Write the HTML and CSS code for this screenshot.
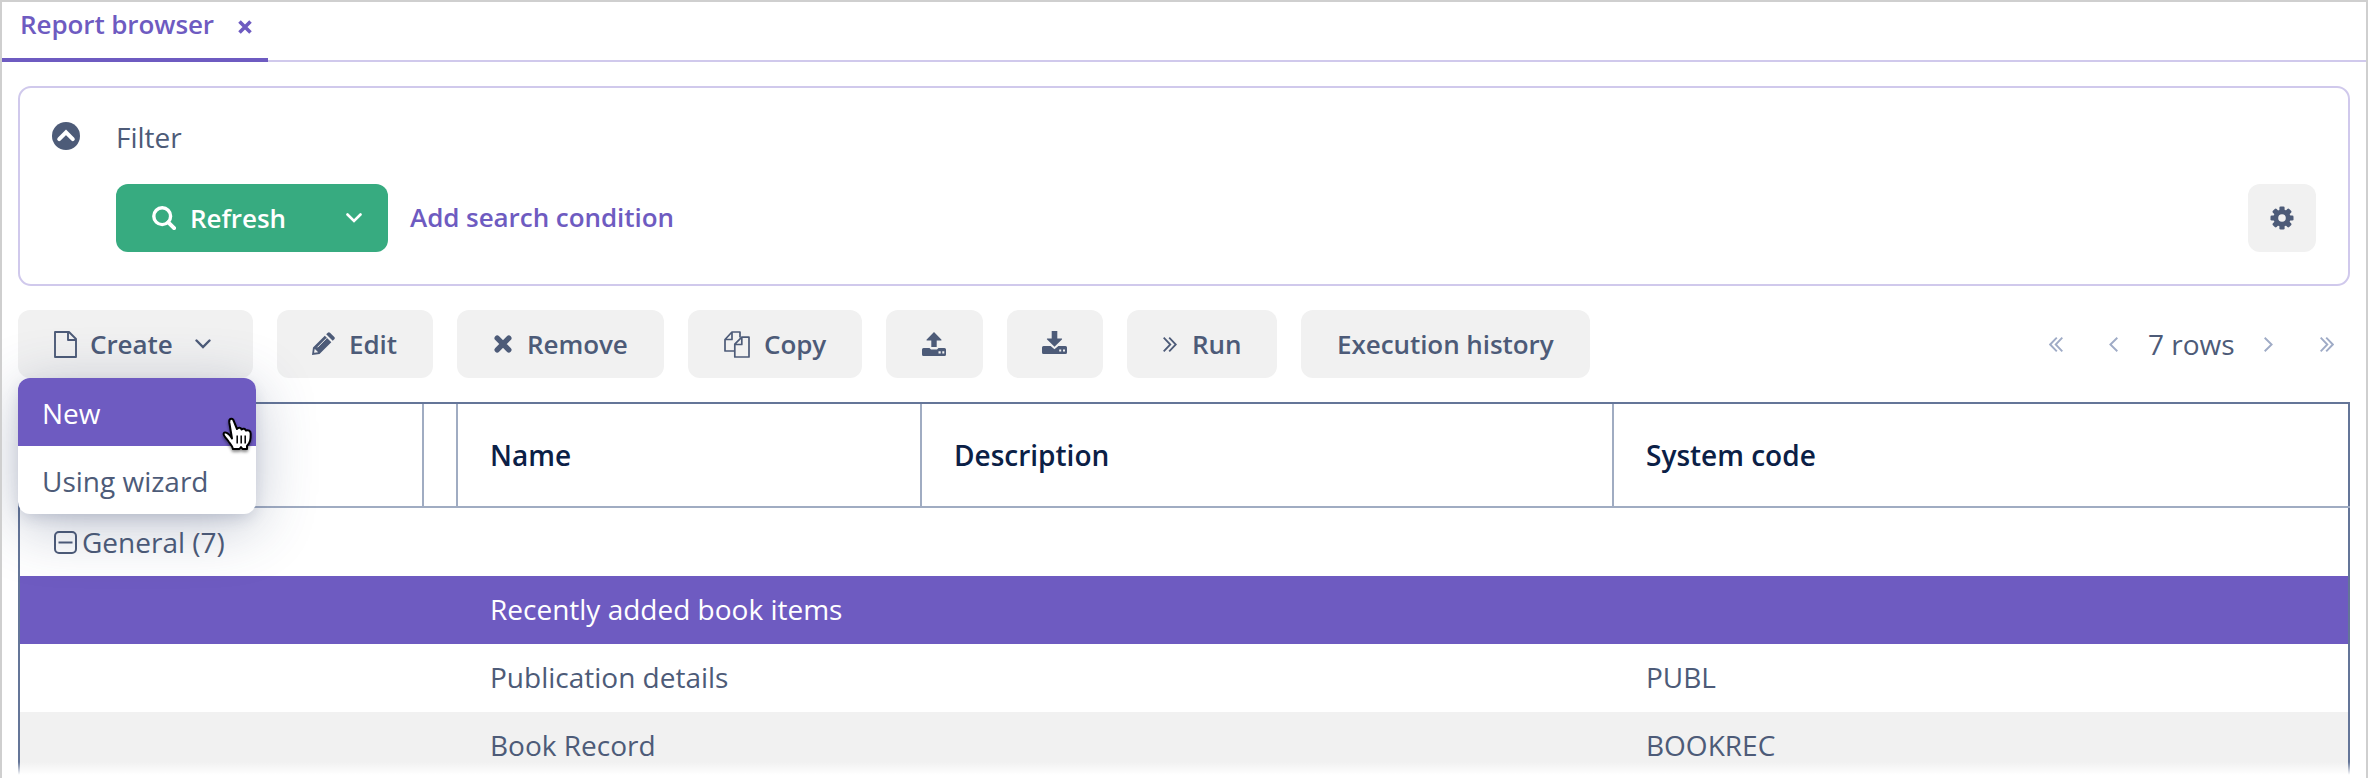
FILE: index.html
```html
<!DOCTYPE html>
<html lang="en">
<head>
<meta charset="utf-8">
<title>Report browser</title>
<link rel="stylesheet" href="styles.css">
</head>
<body>
<div class="window">
  <nav class="tabs">
    <div class="tab"><span class="tab-label">Report browser</span>
      <svg class="tab-close" width="14" height="14" viewBox="0 0 14 14"><path d="M1.500 1.500l11 11M12.500 1.500l-11 11" fill="none" stroke="currentColor" stroke-width="3.600"/></svg>
    </div>
  </nav>
  <main class="content">
    <section class="filter">
      <div class="filter-head">
        <svg width="28" height="28" viewBox="0 0 28 28"><circle cx="14" cy="14" r="14" fill="currentColor"/><path d="M7.200 17.200L14 10.400l6.800 6.800" fill="none" stroke="#fff" stroke-width="4" stroke-linecap="round"/></svg>
        <span class="filter-title">Filter</span>
      </div>
      <div class="filter-body">
        <button class="refresh">
          <svg class="search-icon" width="24" height="24" viewBox="0 0 24 24"><circle cx="10.200" cy="10.200" r="8.400" fill="none" stroke="currentColor" stroke-width="3.400"/><path d="M16.300 16.300l5.800 5.800" stroke="currentColor" stroke-width="4" stroke-linecap="round"/></svg>
          <span class="refresh-label">Refresh</span>
          <svg class="refresh-arrow" width="16" height="10" viewBox="0 0 16 10"><path d="M1.500 1.500L8 8l6.500-6.500" fill="none" stroke="currentColor" stroke-width="2.600" stroke-linecap="round"/></svg>
        </button>
        <a class="add-condition">Add search condition</a>
        <button class="settings">
          <svg width="24" height="24" viewBox="-12 -12 24 24"><g fill="currentColor"><rect x="-2.600" y="-11.500" width="5.200" height="23" rx="1.300"/><rect x="-2.600" y="-11.500" width="5.200" height="23" rx="1.300" transform="rotate(45)"/><rect x="-2.600" y="-11.500" width="5.200" height="23" rx="1.300" transform="rotate(90)"/><rect x="-2.600" y="-11.500" width="5.200" height="23" rx="1.300" transform="rotate(135)"/><circle r="8.600"/></g><circle r="3.800" fill="#f1f1f1"/></svg>
        </button>
      </div>
    </section>

    <div class="toolbar">
      <div class="create-wrap">
        <button class="btn create">
          <svg width="23" height="27" viewBox="0 0 23 27"><path d="M1 1h14l7 7v18H1zM14 1v8h8" fill="none" stroke="currentColor" stroke-width="1.900" stroke-linejoin="round"/></svg>
          <span class="create-label">Create</span>
          <svg class="create-arrow" width="16" height="10" viewBox="0 0 16 10"><path d="M1.500 1.500L8 8l6.500-6.500" fill="none" stroke="currentColor" stroke-width="2.400" stroke-linecap="round"/></svg>
        </button>
        <div class="menu">
          <div class="menu-item active">New</div>
          <div class="menu-item">Using wizard</div>
          <svg class="cursor" width="36" height="40" viewBox="0 0 36 40"><path d="M11 22.500L8.300 6.500c-.6-4.500 3.700-5 4.700-.8l3 7.300c1.500-2 4-1.500 4.500.5 1.600-1.500 3.800-.8 4.300 1 2.400-1 4.900.4 4.900 3.200 0 6-.4 8.800-3.700 12.300v3h-4.500l-1.500-2-1.500 2h-6.500c-.5-3-2.200-4.600-4.400-7.500-1.800-2.500-5-5.500-5-7.500 0-2.400 4-2.700 8.400 4.500z" class="cursor-hand"/><path d="M16.200 19.500v8M20.200 19.500v8M24.200 19.500v8" stroke="#000" stroke-width="1.500"/></svg>
        </div>
      </div>
      <button class="btn edit">
        <svg width="24" height="24" viewBox="0 0 24 24"><path d="M1 23l1-7.500L13.800 3.700l6.500 6.500L8.500 22zM15.200 2.300l1.600-1.600c.7-.7 1.500-.7 2.200 0L23.300 5c.7.700.7 1.500 0 2.200l-1.600 1.600z" fill="currentColor"/><path d="M3.700 16.800l3.500 3.500-3.800.5-.3-.3z" fill="#f1f1f1"/><path d="M6.500 15.300l9-9" stroke="#f1f1f1" stroke-width="1"/></svg>
        <span>Edit</span>
      </button>
      <button class="btn remove">
        <svg width="18" height="18" viewBox="0 0 18 18"><path d="M3.200 3.200l11.600 11.600M14.800 3.200L3.200 14.800" stroke="currentColor" stroke-width="5.400" stroke-linecap="round"/></svg>
        <span>Remove</span>
      </button>
      <button class="btn copy">
        <svg width="26" height="27" viewBox="0 0 26 27"><g fill="none" stroke="currentColor" stroke-width="1.700" stroke-linejoin="round"><path d="M10.500 20H1V8.500L8 1h8v5.500M8 1v7.500H1"/><path d="M10.800 13.200l7-7H25V26H10.800zM17.800 6.500v7h-7"/></g></svg>
        <span>Copy</span>
      </button>
      <button class="btn upload">
        <svg width="24" height="24" viewBox="0 0 24 24"><g fill="currentColor"><path d="M12 0l7.300 7.500c.4.500.2 1-.4 1H14.700V15H9.300V8.500H5.100c-.6 0-.8-.5-.4-1z"/><path d="M1.500 16H7.500l1.500 1.500h6L16.500 16H22.500Q24 16 24 17.500V22.500Q24 24 22.500 24H1.500Q0 24 0 22.500V17.500Q0 16 1.500 16z"/></g><path d="M16.500 19.200H18.700v2.200H16.500zM20.300 19.200H22.300v2.200H20.300z" fill="#f1f1f1"/></svg>
      </button>
      <button class="btn download">
        <svg width="25" height="23" viewBox="0 0 25 23"><g fill="currentColor"><path d="M9.700 0H15.300V7.500H19.500c.6 0 .8.500.4 1L12.500 15.800 5.100 8.500c-.4-.5-.2-1 .4-1H9.700z"/><path d="M1.500 15H8.600l3.900 3.300 3.900-3.300H23.500Q25 15 25 16.500V21.500Q25 23 23.500 23H1.500Q0 23 0 21.500V16.500Q0 15 1.500 15z"/></g><path d="M17.200 18.500H19.200v2H17.200zM21 18.500H23v2H21z" fill="#f1f1f1"/></svg>
      </button>
      <button class="btn run">
        <svg width="14" height="15" viewBox="0 0 14 15"><path d="M.7.700l6.600 6.800L.7 14.300M6.200.700l6.600 6.800-6.600 6.800" fill="none" stroke="currentColor" stroke-width="1.800"/></svg>
        <span>Run</span>
      </button>
      <button class="btn history"><span>Execution history</span></button>
      <div class="pager">
        <svg width="14" height="15" viewBox="0 0 14 15"><path d="M13.300.700L6.700 7.500l6.600 6.800M7.800.700L1.200 7.500l6.600 6.800"/></svg>
        <svg class="prev" width="9" height="15" viewBox="0 0 9 15"><path d="M8.300.700L1.400 7.500l6.900 6.800"/></svg>
        <span class="rows">7 rows</span>
        <svg class="next" width="9" height="15" viewBox="0 0 9 15"><path d="M.7.700l6.900 6.800-6.900 6.800"/></svg>
        <svg width="14" height="15" viewBox="0 0 14 15"><path d="M.7.700l6.600 6.800L.7 14.300M6.200.700l6.600 6.800-6.600 6.800"/></svg>
      </div>
    </div>

    <div class="table">
      <div class="row head">
        <div class="cell"></div><div class="cell"></div>
        <div class="cell">Name</div><div class="cell">Description</div><div class="cell">System code</div>
      </div>
      <div class="group">
        <svg width="23" height="23" viewBox="0 0 23 23"><rect x="1" y="1" width="21" height="21" rx="4" fill="none" stroke="currentColor" stroke-width="2"/><path d="M4.500 11.500h14" stroke="currentColor" stroke-width="2"/></svg>
        <span>General (7)</span>
      </div>
      <div class="row selected"><div></div><div></div><div class="cell">Recently added book items</div><div></div><div></div></div>
      <div class="row"><div></div><div></div><div class="cell">Publication details</div><div></div><div class="cell">PUBL</div></div>
      <div class="row odd"><div></div><div></div><div class="cell">Book Record</div><div></div><div class="cell">BOOKREC</div></div>
    </div>
  </main>
  <div class="fade"></div>
</div>
</body>
</html>
```
FILE: styles.css
```css
* { box-sizing: border-box; }
body {
  margin: 0;
  background: #fff;
  color: #4d5b78;
  font: 28px/1.362 "Open Sans", "Noto Sans", sans-serif;
}
svg { display: block; flex: none; }
button {
  border: 0;
  padding: 0;
  margin: 0;
  color: inherit;
  font: 600 26px/1.362 "Open Sans", "Noto Sans", sans-serif;
  letter-spacing: -.06px;
}
span, a, .cell, .menu-item { white-space: nowrap; }

.window {
  position: relative;
  height: 778px;
  overflow: hidden;
  border: 2px solid #cfcfcf;
  border-bottom: 0;
}
.tabs {
  display: flex;
  height: 60px;
  box-shadow: inset 0 -2px #d0c9ec;
}
.tab {
  display: flex;
  width: 266px;
  padding-left: 18px;
  border-bottom: 4px solid #6e5bc1;
  color: #6e5bc1;
  font-size: 26px;
  font-weight: 600;
  letter-spacing: -.09px;
}
.tab-label { width: 218px; margin-top: 5px; }
.tab-close { margin-top: 18px; }

.content { padding: 24px 16px 0; }
.filter {
  height: 200px;
  padding: 28px 32px 0;
  border: 2px solid #d0c9ec;
  border-radius: 13px;
}
.filter-head { display: flex; align-items: center; height: 40px; }
.filter-title { margin-left: 36px; padding-top: 2px; }
.filter-body { display: flex; align-items: center; margin-top: 28px; padding-left: 64px; }
.refresh {
  display: flex;
  align-items: center;
  width: 272px;
  height: 68px;
  padding-left: 36px;
  border-radius: 12px;
  background: #37ab80;
  color: #fff;
}
.refresh-label { width: 155px; margin-left: 14px; padding-top: 1px; text-align: left; }
.refresh-arrow { margin-left: 1px; }
.add-condition {
  margin-left: 22px;
  color: #6e5bc1;
  font-size: 26px;
  font-weight: 600;
  letter-spacing: -.06px;
}
.settings {
  display: grid;
  place-items: center;
  width: 68px;
  height: 68px;
  margin-left: auto;
  border-radius: 12px;
  background: #f1f1f1;
}

.toolbar { display: flex; gap: 24px; height: 68px; margin-top: 24px; }
.btn {
  display: flex;
  align-items: center;
  height: 68px;
  padding-left: 36px;
  border-radius: 12px;
  background: #f1f1f1;
}
.btn span { padding-top: 1px; }
.create-wrap { position: relative; z-index: 2; }
.create { width: 235px; }
.create-label { width: 105px; margin-left: 13px; text-align: left; }
.edit { width: 156px; padding-left: 34px; gap: 14px; }
.remove { width: 207px; padding-left: 37px; gap: 15px; }
.copy { width: 174px; gap: 14px; }
.upload { width: 97px; }
.download { width: 96px; padding-left: 35px; padding-bottom: 3px; }
.run { width: 150px; gap: 15px; }
.history { width: 289px; }

.menu {
  position: absolute;
  top: 68px;
  left: 0;
  width: 238px;
  border-radius: 12px;
  background: #fff;
  box-shadow: 0 6px 16px -4px rgba(50, 65, 105, .22), 0 12px 60px 0 rgba(50, 65, 105, .3);
}
.menu-item { height: 68px; padding: 16px 24px 0; }
.menu-item.active { border-radius: 12px 12px 0 0; background: #6e5bc1; color: #fff; }
.cursor {
  position: absolute;
  top: 38px;
  left: 203px;
  filter: drop-shadow(0 2px 1.5px rgba(0, 0, 0, .45));
}
.cursor-hand { fill: #fff; stroke: #000; stroke-width: 2; stroke-linejoin: round; }

.pager { display: flex; align-items: center; margin-left: auto; padding-right: 16px; color: #9fabc6; }
.pager path { fill: none; stroke: currentColor; stroke-width: 1.900; }
.prev { margin-left: 46px; }
.rows { width: 116px; margin-left: 30px; color: #4d5b78; }
.next { margin-right: 47px; }

.table {
  height: 380px;
  margin-top: 24px;
  border: 2px solid #647598;
  border-bottom: 0;
}
.row {
  display: grid;
  grid-template-columns: 404px 34px 464px 692px 1fr;
  height: 68px;
}
.cell { display: flex; align-items: center; padding: 0 0 1px 32px; }
.head { height: 104px; margin-right: -2px; border-bottom: 2px solid #a0acc2; color: #0b2046; font-weight: 600; }
.head .cell { padding-bottom: 0; border-right: 2px solid #a0acc2; }
.head .cell:last-child { border-right: 2px solid #647598; }
.group { display: flex; align-items: center; gap: 5px; height: 68px; padding-left: 34px; }
.selected { background: #6e5bc1; color: #fff; }
.odd { background: #f1f1f1; }
.fade {
  position: absolute;
  inset: auto -2px 0;
  height: 16px;
  background: linear-gradient(rgba(255, 255, 255, 0), #fff 80%);
}
```
